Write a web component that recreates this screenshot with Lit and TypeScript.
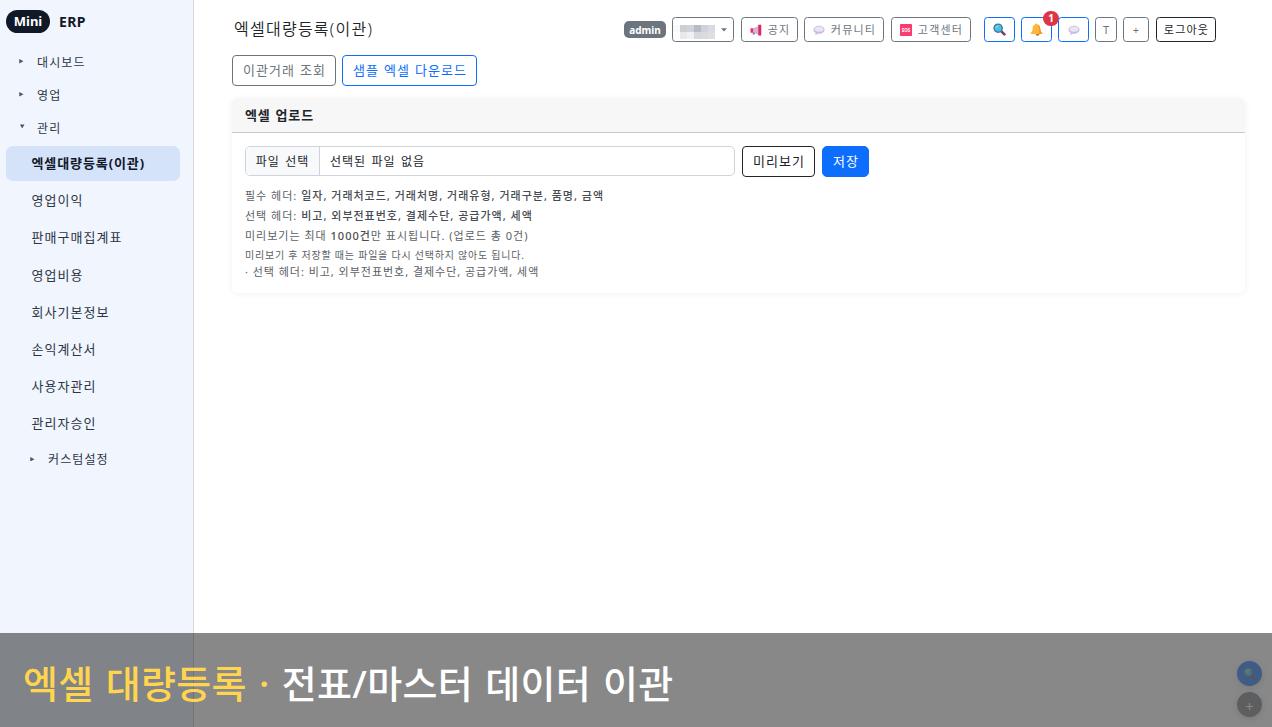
import { LitElement, html, css, svg } from "lit";
import { customElement } from "lit/decorators.js";

const search = html`<svg class="ico" width="13" height="13" viewBox="0 0 24 24">
  <path d="M14.5 14.5l6.500 6.500" stroke="#7d3f72" stroke-width="5" stroke-linecap="round"/>
  <circle cx="9.500" cy="9.500" r="7.600" fill="#45c1e4" stroke="#45788f" stroke-width="2.400"/>
  <path d="M5.600 9a4.400 4.400 0 0 1 4-3.900" stroke="#a8e8f8" stroke-width="1.800" fill="none" stroke-linecap="round"/></svg>`;
const bell = html`<svg class="ico" width="13" height="13" viewBox="0 0 24 24">
  <circle cx="14" cy="20.600" r="3" fill="#c9702c"/>
  <path d="M11.500 .8c1.500 0 2.100 .9 2.200 2 3.500 1 5 4 5.300 7.600 .3 3.400 1.500 5.800 3.600 8.100 .6 .8 .1 1.700 -.9 1.700H2.300c-1 0-1.500-.9-.9-1.700 2.100-2.300 3.100-4.700 3.300-8.100 .2-3.600 1.500-6.600 4.700-7.600 .1-1.100 .6-2 2.100-2z" fill="#fdb83b"/>
  <path d="M13.700 2.800c3.500 1 5 4 5.300 7.600 .3 3.400 1.500 5.800 3.600 8.100 .6 .8 .1 1.700-.9 1.700h-6c2-4 1.800-12-2-17.400z" fill="#f39a35"/></svg>`;
const bubble = html`<svg class="ico" width="12" height="12" viewBox="0 0 24 24">
  <path d="M12 3.500c6.400 0 11.200 3.400 11.200 8s-4.800 8-11.200 8c-.9 0-1.700-.1-2.500-.2-1.300 1.300-3.300 2.200-5.700 2.200 1-1 1.600-2.200 1.600-3.600C2.600 16.500 .8 14.200 .8 11.500c0-4.600 4.800-8 11.200-8z" fill="#cbbbe0"/>
  <ellipse cx="12" cy="10.200" rx="9" ry="5.400" fill="#ebe4f5"/></svg>`;
const horn = html`<svg class="ico" width="12" height="12" viewBox="0 0 24 24">
  <path d="M1 8.500h6v9H1z" fill="#f0296a"/><path d="M7 8.500L17 4v17.500L7 17.500z" fill="#cbb8d6"/>
  <path d="M16.500 1.500h6v21.500h-6z" fill="#e0245e"/><path d="M5.500 17h4v4h-4z" fill="#8d6c9c"/></svg>`;
const sos = html`<svg class="ico" width="12" height="12" viewBox="0 0 24 24">
  <rect width="24" height="24" rx="1.500" fill="#fa3c70"/>
  <text x="12" y="16" text-anchor="middle" class="sos">SOS</text></svg>`;

const mosaic = [
  ["#f9f9fa", "#cfcfd0", "#d2d3d8", "#b4bbc9", "#cfd2d9", "#d6dbe4"],
  ["#fdfdfd", "#e8e8ea", "#f0f0f2", "#d6d8e0", "#dcd9df", "#dddfe2"],
];

@customElement("app-root")
export class AppRoot extends LitElement {
  static styles = css`
    :host { display: block; height: 727px; position: relative; overflow: hidden; background: #fff; color: #212529;
      font-family: "Noto Sans", "Noto Sans CJK KR", sans-serif; font-size: 13px; font-weight: 400; }
    * { box-sizing: border-box; }
    .app { display: flex; height: 100%; }
    .side { width: 194px; flex: none; background: #f1f5fd; border-right: 1px solid #d2d7de; padding: 10px 13px 0 6px; color: #2c3646; }
    .brand { display: flex; align-items: center; gap: 9px; height: 23px; margin-bottom: 12px; font-weight: 700; font-size: 14px; color: #111827; letter-spacing: .4px; }
    .brand span { padding-bottom: 1px; }
    .brand .pill { background: #111827; color: #fff; border-radius: 12px; height: 23px; width: 44px; display: grid; place-items: center; font-size: 13px; letter-spacing: 0; }
    .group { display: flex; align-items: center; height: 33px; padding-left: 13px; font-size: 12px; letter-spacing: 1.100px; white-space: nowrap; }
    .group svg { width: 4.500px; height: 4.500px; margin-right: 13.500px; fill: #4b5563; flex: none; }
    .group .down { margin: -3px 12.500px 0 1px; }
    .group.sub { padding-left: 24px; margin-top: -1px; }
    .item { display: flex; align-items: center; height: 35px; margin-bottom: 2.180px; padding: 0 0 2px 25.500px; border-radius: 7px; font-size: 13px; letter-spacing: 1.050px; white-space: nowrap; }
    .item.on { background: #d4e2fa; font-weight: 700; color: #111827; margin-top: 2px; letter-spacing: .9px; }
    .main { flex: 1; padding: 17px 27px 0 38px; }
    .top { display: flex; align-items: center; height: 25px; padding-right: 29px; }
    h1 { margin: 0 auto 0 2px; font-size: 16px; font-weight: 350; letter-spacing: 1.250px; line-height: 24px; height: 25px; }
    .role { background: #6c757d; color: #fff; font-weight: 700; font-size: 10px; width: 42px; height: 17px; border-radius: 5px; display: grid; place-items: center; margin-right: 6px; }
    .b { height: 25px; border: 1px solid #6c757d; border-radius: 3.500px; display: flex; align-items: center; justify-content: center; color: #6c757d; font-size: 11px; letter-spacing: 1.200px; white-space: nowrap; gap: 6px; background: #fff; margin-right: 6px; position: relative; }
    .b span { margin: -1px -1px 0 0; }
    .who { width: 62px; margin-right: 7px; gap: 5px; justify-content: flex-start; }
    .notice { width: 57px; } .comm { width: 80px; margin-right: 7px; } .help { width: 80px; margin-right: 13px; }
    .blue { width: 31px; border-color: #0d6efd; }
    .t { width: 22px; letter-spacing: 0; } .plus { width: 26px; margin-right: 7px; letter-spacing: 0; }
    .out { width: 60px; border-color: #212529; color: #212529; margin-right: 0; }
    .ico { display: block; flex: none; }
    .sos { font: 700 9px "Noto Sans"; fill: #fff; letter-spacing: 0; }
    .b .count { position: absolute; right: -8px; top: -7px; margin: 0; width: 16px; height: 15px; border-radius: 8px; background: #dc3545; color: #fff; font-weight: 700; font-size: 10px; display: grid; place-items: center; letter-spacing: 0; line-height: 1; padding-bottom: 2px; }
    .actions { display: flex; gap: 6px; margin-top: 13px; }
    .btn { height: 31px; border: 1px solid #6c757d; border-radius: 4px; display: grid; place-items: center; color: #6c757d; font-size: 13px; letter-spacing: 1.050px; word-spacing: .5px; white-space: nowrap; padding: 0 0 2px 1px; }
    .w1 { width: 104px; } .w2 { width: 135px; color: #0d6efd; border-color: #0d6efd; }
    .card { margin-top: 12px; height: 195px; border-radius: 6px; box-shadow: 0 1px 6px rgba(0,0,0,.06); }
    .head { height: 35px; background: #f7f7f7; border-bottom: 1px solid #c9c9c9; border-radius: 6px 6px 0 0; padding: 0 13px; line-height: 34px; font-weight: 700; font-size: 13px; letter-spacing: .9px; word-spacing: .5px; }
    .body { padding: 13px; }
    .row { display: flex; gap: 7px; height: 31px; }
    .file { width: 490px; height: 30px; border: 1px solid #ced4da; border-radius: 5px; display: flex; font-size: 12px; line-height: 29px; letter-spacing: 1px; word-spacing: 1.300px; overflow: hidden; }
    .pick { width: 74px; flex: none; text-align: center; background: #f8f9fa; border-right: 1px solid #ced4da; margin-right: 10px; }
    .pre { width: 73px; border-color: #212529; color: #212529; }
    .save { width: 47px; background: #0d6efd; border-color: #0d6efd; color: #fff; border-radius: 5px; }
    .hint { font-size: 11px; line-height: 20px; color: #5a6066; white-space: nowrap; letter-spacing: 1px; }
    .hint b { color: #474c51; font-weight: 500; }
    .hints { padding-top: 9px; }
    .small { font-size: 10px; line-height: 18px; letter-spacing: .770px; }
    .last { line-height: 16px; letter-spacing: .970px; }
    .fab { position: absolute; left: 1237px; width: 25px; height: 25px; border-radius: 50%; opacity: .56; display: grid; place-items: center; color: #fff; font-size: 15px; font-weight: 400; box-shadow: 0 2px 6px rgba(0,0,0,.2); }
    .f1 { top: 661px; background: #0d6efd; } .f2 { top: 692px; background: #6c757d; padding-top: 2px; }
    .caption { position: absolute; left: 0; right: 0; top: 633px; height: 94px; background: rgba(0,0,0,.467); color: #fff; padding-left: 23px; font-size: 38px; font-weight: 500; line-height: 100px; white-space: nowrap; letter-spacing: .300px; word-spacing: 2px; }
    .caption span { color: #ffd54f; }
  `;

  private group(label: string, cls = "", open = false) {
    return html`<div class="group ${cls}">${open
      ? html`<svg class="down" viewBox="0 0 5 5"><path d="M0 .5h5L2.500 5z"/></svg>`
      : html`<svg viewBox="0 0 5 5"><path d="M.3 0v5L5 2.500z"/></svg>`}<span>${label}</span></div>`;
  }

  render() {
    const items = ["영업이익", "판매구매집계표", "영업비용", "회사기본정보", "손익계산서", "사용자관리", "관리자승인"];
    return html`
      <div class="app">
        <nav class="side">
          <div class="brand"><span class="pill">Mini</span><span>ERP</span></div>
          ${this.group("대시보드")}${this.group("영업")}${this.group("관리", "", true)}
          <div class="item on"><span>엑셀대량등록(이관)</span></div>
          ${items.map((i) => html`<div class="item"><span>${i}</span></div>`)}
          ${this.group("커스텀설정", "sub")}
        </nav>
        <main class="main">
          <header class="top">
            <h1>엑셀대량등록(이관)</h1>
            <span class="role">admin</span>
            <div class="b who">
              <svg width="43" height="23" viewBox="0 0 43 23" shape-rendering="crispEdges">
                ${mosaic.map((r, y) => r.map((c, x) => svg`<rect x=${x * 7} y=${7 + y * 7} width="7" height="7" fill=${c}/>`))}
              </svg>
              <svg width="6" height="4" viewBox="0 0 6 4"><path d="M0 .3h6L3 3.600z" fill="#6c757d"/></svg>
            </div>
            <div class="b notice">${horn}<span>공지</span></div>
            <div class="b comm">${bubble}<span>커뮤니티</span></div>
            <div class="b help">${sos}<span>고객센터</span></div>
            <div class="b blue">${search}</div>
            <div class="b blue">${bell}<span class="count">1</span></div>
            <div class="b blue">${bubble}</div>
            <div class="b t">T</div>
            <div class="b plus">+</div>
            <div class="b out"><span>로그아웃</span></div>
          </header>
          <div class="actions"><div class="btn w1">이관거래 조회</div><div class="btn w2">샘플 엑셀 다운로드</div></div>
          <section class="card">
            <div class="head">엑셀 업로드</div>
            <div class="body">
              <div class="row">
                <div class="file"><span class="pick">파일 선택</span><span>선택된 파일 없음</span></div>
                <div class="btn pre">미리보기</div><div class="btn save">저장</div>
              </div>
              <div class="hints">
                <div class="hint">필수 헤더: <b>일자, 거래처코드, 거래처명, 거래유형, 거래구분, 품명, 금액</b></div>
                <div class="hint">선택 헤더: <b>비고, 외부전표번호, 결제수단, 공급가액, 세액</b></div>
                <div class="hint">미리보기는 최대 <b>1000건</b>만 표시됩니다. (업로드 총 0건)</div>
                <div class="hint small">미리보기 후 저장할 때는 파일을 다시 선택하지 않아도 됩니다.</div>
                <div class="hint last">· 선택 헤더: 비고, 외부전표번호, 결제수단, 공급가액, 세액</div>
              </div>
            </div>
          </section>
        </main>
      </div>
      <div class="fab f1">${search}</div>
      <div class="fab f2">+</div>
      <div class="caption"><span>엑셀 대량등록 ·</span> 전표/마스터 데이터 이관</div>`;
  }
}
